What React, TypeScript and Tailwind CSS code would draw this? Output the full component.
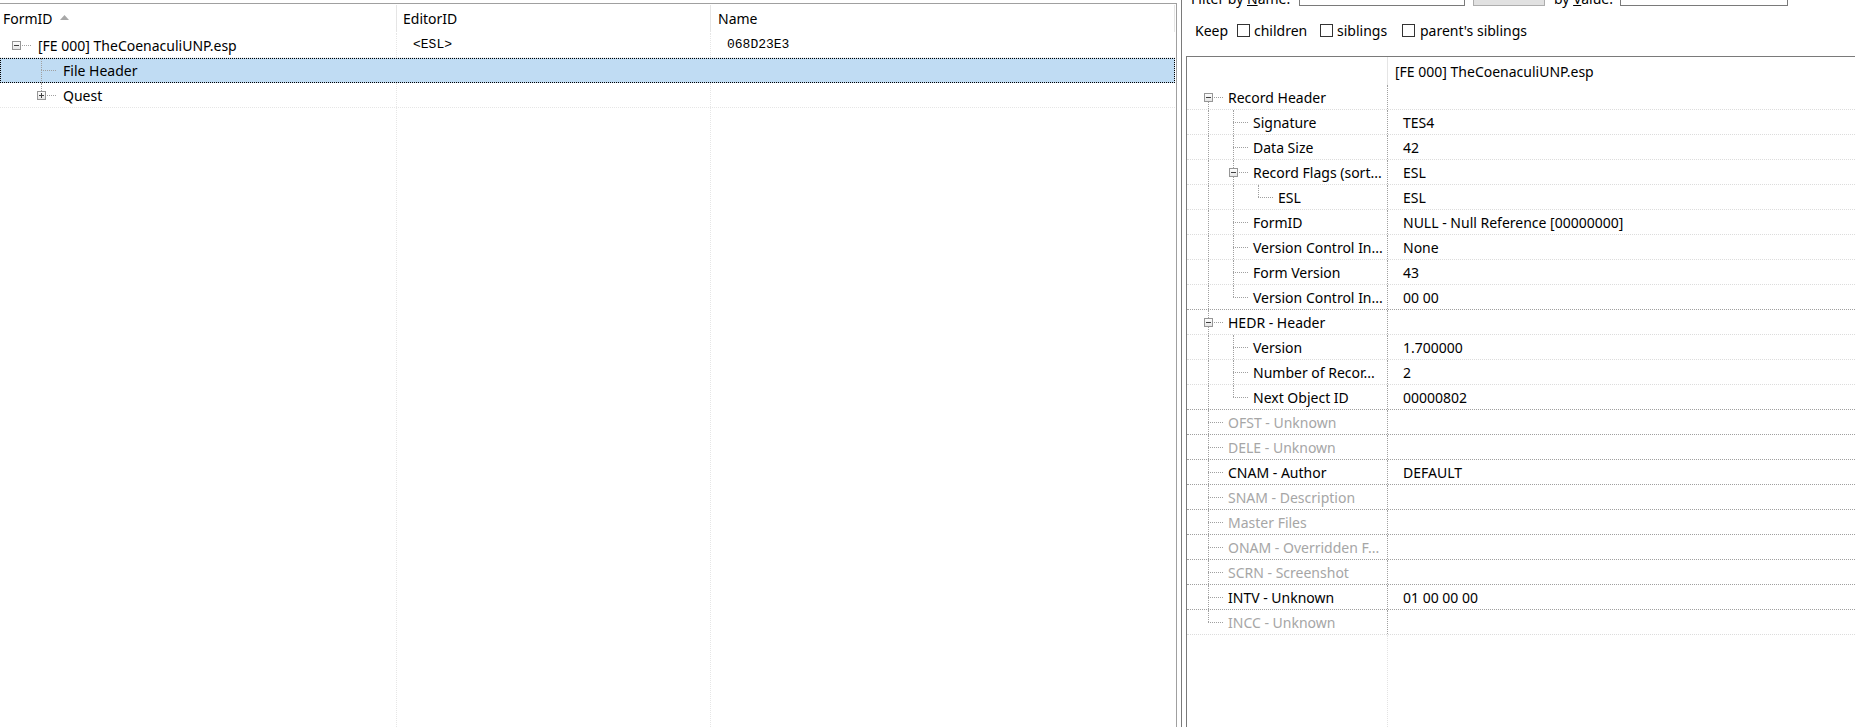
import React from 'react';

type RecordRow = {
  name: string;
  value?: string;
  level: number;
  exp?: 'minus' | 'plus';
  disabled?: boolean;
};

const recordRows: RecordRow[] = [
  { name: 'Record Header', level: 0, exp: 'minus' },
  { name: 'Signature', value: 'TES4', level: 1 },
  { name: 'Data Size', value: '42', level: 1 },
  { name: 'Record Flags (sort...', value: 'ESL', level: 1, exp: 'minus' },
  { name: 'ESL', value: 'ESL', level: 2 },
  { name: 'FormID', value: 'NULL - Null Reference [00000000]', level: 1 },
  { name: 'Version Control In...', value: 'None', level: 1 },
  { name: 'Form Version', value: '43', level: 1 },
  { name: 'Version Control In...', value: '00 00', level: 1 },
  { name: 'HEDR - Header', level: 0, exp: 'minus' },
  { name: 'Version', value: '1.700000', level: 1 },
  { name: 'Number of Recor...', value: '2', level: 1 },
  { name: 'Next Object ID', value: '00000802', level: 1 },
  { name: 'OFST - Unknown', level: 0, disabled: true },
  { name: 'DELE - Unknown', level: 0, disabled: true },
  { name: 'CNAM - Author', value: 'DEFAULT', level: 0 },
  { name: 'SNAM - Description', level: 0, disabled: true },
  { name: 'Master Files', level: 0, disabled: true },
  { name: 'ONAM - Overridden F...', level: 0, disabled: true },
  { name: 'SCRN - Screenshot', level: 0, disabled: true },
  { name: 'INTV - Unknown', value: '01 00 00 00', level: 0 },
  { name: 'INCC - Unknown', level: 0, disabled: true },
];

// does row i have a later sibling on the same level
const hasNextSibling = (rows: { level: number }[], i: number) => {
  const lvl = rows[i].level;
  for (let j = i + 1; j < rows.length; j++) {
    if (rows[j].level < lvl) return false;
    if (rows[j].level === lvl) return true;
  }
  return false;
};

const guidesFor = (rows: { level: number }[], i: number) => {
  const out: boolean[] = [];
  for (let k = 0; k < rows[i].level; k++) {
    let j = i - 1;
    while (j >= 0 && rows[j].level !== k) j--;
    out.push(j >= 0 ? hasNextSibling(rows, j) : false);
  }
  return out;
};

const Expander = ({ kind }: { kind: 'minus' | 'plus' }) => (
  <svg width="9" height="9" viewBox="0 0 9 9" className="absolute left-[8px] top-[8px]">
    <defs>
      <linearGradient id="expg" x1="0" y1="0" x2="0" y2="1">
        <stop offset="0" stopColor="#ffffff" />
        <stop offset="1" stopColor="#e4e4e4" />
      </linearGradient>
    </defs>
    <rect x="0.5" y="0.5" width="8" height="8" fill="url(#expg)" stroke="#969696" />
    <path d="M2 4.5h5" stroke="#404040" />
    {kind === 'plus' && <path d="M4.5 2v5" stroke="#404040" />}
  </svg>
);

interface TreeLinesProps {
  guides: boolean[];
  first: boolean;
  last: boolean;
  exp?: 'minus' | 'plus';
}

const TreeLines: React.FC<TreeLinesProps> = ({ guides, first, last, exp }) => (
  <>
    {guides.map((g, k) => (
      <span key={k} className="relative h-full w-[25px] shrink-0">
        {g && <span className="absolute left-[12px] top-0 bottom-0 border-l border-dotted border-[#a0a0a0]" />}
      </span>
    ))}
    <span className="relative h-full w-[25px] shrink-0">
      {!first && <span className="absolute left-[12px] top-0 h-[12px] border-l border-dotted border-[#a0a0a0]" />}
      {!last && <span className="absolute left-[12px] top-[12px] bottom-0 border-l border-dotted border-[#a0a0a0]" />}
      <span className="absolute left-[12px] top-[12px] w-[15px] border-t border-dotted border-[#a0a0a0]" />
      {exp && <Expander kind={exp} />}
    </span>
  </>
);

const FileTree = () => {
  const rows = [
    { level: 0, name: '[FE 000] TheCoenaculiUNP.esp', editor: '<ESL>', title: '068D23E3', exp: 'minus' as const },
    { level: 1, name: 'File Header', selected: true },
    { level: 1, name: 'Quest', exp: 'plus' as const },
  ];

  return (
    <div className="flex h-full w-[1177px] flex-col border-t border-r border-[#a0a0a0] bg-white">
      {/* column header */}
      <div className="flex h-[29px] shrink-0 py-[1px]">
        <div className="flex w-[397px] items-center border-r border-[#e5e5e5] pl-[3px]">
          <span>FormID</span>
          <svg width="9" height="5" viewBox="0 0 9 5" className="ml-[7px] mb-[3px]">
            <path d="M0 5L4.5 0L9 5Z" fill="#a8a8a8" />
          </svg>
        </div>
        <div className="flex w-[314px] items-center border-r border-[#e5e5e5] pl-[6px]">EditorID</div>
        <div className="flex w-[464px] items-center border-r border-[#e5e5e5] pl-[7px]">Name</div>
      </div>

      {rows.map((r, i) => (
        <div
          key={i}
          className={`flex h-[25px] shrink-0 w-[1175px] ${
            r.selected
              ? 'bg-[#c0dcf3] outline-1 outline-dotted outline-black -outline-offset-1'
              : 'border-b border-dotted border-[#e6e6e6]'
          }`}
        >
          <div className={`flex h-full w-[397px] items-center pl-[4px] ${r.selected ? '' : 'border-r border-dotted border-[#e6e6e6]'}`}>
            <TreeLines
              guides={guidesFor(rows, i)}
              first={r.level === 0}
              last={!hasNextSibling(rows, i)}
              exp={r.exp}
            />
            <span className="ml-[9px] whitespace-nowrap">{r.name}</span>
          </div>
          <div className={`flex h-full w-[314px] items-center pl-[16px] font-['Liberation_Mono',monospace] text-[13px] ${r.selected ? '' : 'border-r border-dotted border-[#e6e6e6]'}`}>
            {r.editor}
          </div>
          <div className="flex h-full w-[464px] items-center pl-[16px] font-['Liberation_Mono',monospace] text-[13px]">
            {r.title}
          </div>
        </div>
      ))}

      <div className="flex flex-1">
        <div className="w-[397px] border-r border-dotted border-[#e6e6e6]" />
        <div className="w-[314px] border-r border-dotted border-[#e6e6e6]" />
        <div className="w-[464px]" />
      </div>
    </div>
  );
};

const Checkbox = () => <span className="h-[13px] w-[13px] shrink-0 border border-[#333333] bg-white" />;

const RecordView = () => (
  <div className="flex h-full flex-1 flex-col overflow-hidden bg-white">
    {/* filter bar, scrolled mostly out of view */}
    <div className="-mt-[19px] flex h-[26px] shrink-0 items-center pl-[9px]">
      <span className="w-[108px] whitespace-nowrap pt-[9px]">
        Filter by <u>N</u>ame:
      </span>
      <span className="h-[24px] w-[166px] border border-[#7a7a7a] bg-white" />
      <span className="ml-[8px] h-[24px] w-[72px] border border-[#adadad] bg-[#e1e1e1]" />
      <span className="w-[75px] whitespace-nowrap pl-[9px] pt-[9px]">
        by <u>V</u>alue:
      </span>
      <span className="h-[24px] w-[168px] border border-[#7a7a7a] bg-white" />
    </div>

    {/* keep options */}
    <div className="flex h-[48px] shrink-0 items-center pl-[13px] pb-[1px]">
      <span className="w-[42px]">Keep</span>
      <Checkbox />
      <span className="ml-[4px] w-[66px]">children</span>
      <Checkbox />
      <span className="ml-[4px] w-[65px]">siblings</span>
      <Checkbox />
      <span className="ml-[5px] whitespace-nowrap">parent's siblings</span>
    </div>

    {/* record tree */}
    <div className="ml-[4px] mt-[1px] flex flex-1 flex-col border-t border-l border-[#7a7a7a]">
      <div className="flex h-[28px] shrink-0">
        <div className="w-[201px] border-r border-[#e5e5e5]" />
        <div className="flex items-center pl-[7px] whitespace-nowrap">[FE 000] TheCoenaculiUNP.esp</div>
      </div>

      {recordRows.map((r, i) => {
        const next = recordRows[i + 1];
        const dark = next !== undefined && next.level === 0;
        return (
          <div
            key={i}
            className={`flex h-[25px] shrink-0 border-b border-dotted ${dark ? 'border-[#a0a0a0]' : 'border-[#dcdcdc]'}`}
          >
            <div className="flex h-full w-[201px] shrink-0 items-center border-r border-dotted border-[#a0a0a0] pl-[9px]">
              <TreeLines
                guides={guidesFor(recordRows, i)}
                first={i === 0}
                last={!hasNextSibling(recordRows, i)}
                exp={r.exp}
              />
              <span className={`ml-[7px] whitespace-nowrap ${r.disabled ? 'text-[#a6a6a6]' : 'text-black'}`}>
                {r.name}
              </span>
            </div>
            <div className="flex items-center whitespace-nowrap pl-[15px]">{r.value}</div>
          </div>
        );
      })}

      <div className="flex flex-1">
        <div className="w-[201px] border-r border-dotted border-[#e3e3e3]" />
      </div>
    </div>
  </div>
);

export default function App() {
  return (
    <div className="flex h-[727px] w-[1855px] overflow-hidden bg-white font-['Noto_Sans',sans-serif] text-[14px] text-black">
      <div className="h-full w-[1181px] shrink-0 pt-[3px]">
        <FileTree />
      </div>
      <div className="h-full w-[1px] shrink-0 bg-[#7a7a7a]" />
      <RecordView />
    </div>
  );
}
